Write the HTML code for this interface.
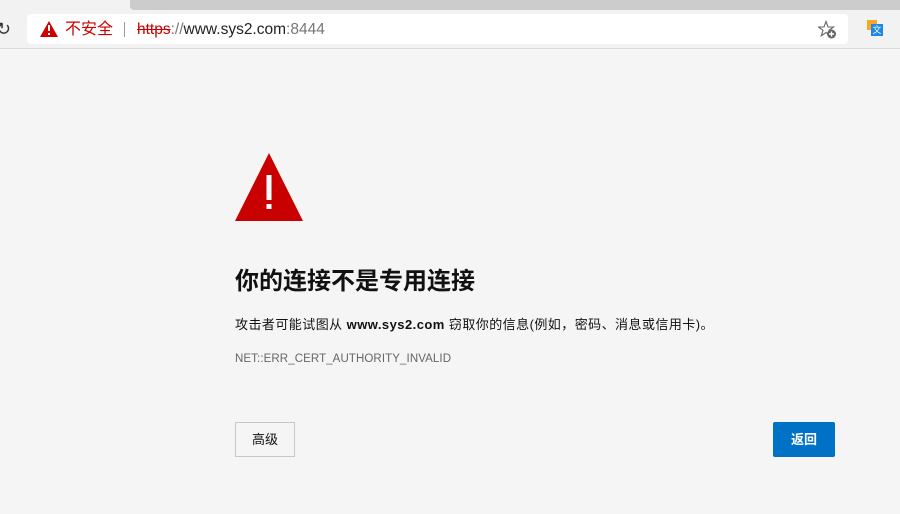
<!DOCTYPE html>
<html><head><meta charset="utf-8"><style>
body{margin:0;width:900px;height:514px;background:#f5f5f5;font-family:"Liberation Sans","Noto Sans CJK SC",sans-serif;position:relative;overflow:hidden}
.abs{position:absolute}
</style></head><body>
<div class="abs" style="left:0;top:0;width:900px;height:48px;background:#f2f2f2"></div>
<div class="abs" style="left:130px;top:0;width:780px;height:10px;background:#cccccc;border-bottom-left-radius:4px"></div>
<div class="abs" style="left:0;top:48px;width:900px;height:1px;background:#d9d9d9"></div>
<div class="abs" style="left:-4px;top:19px;font-size:18px;color:#333">↻</div>
<div class="abs" style="left:27px;top:14px;width:821px;height:30px;background:#fff;border-radius:4px"></div>
<svg class="abs" style="left:40px;top:21px" width="18" height="16" viewBox="0 0 18 16"><path d="M9 0L18 16H0Z" fill="#c00"/><rect x="8" y="4" width="2" height="6" fill="#fff"/><rect x="8" y="12" width="2" height="2" fill="#fff"/></svg>
<div class="abs" style="left:65px;top:20px;font-size:16px;color:#c00;line-height:20px">不安全</div>
<div class="abs" style="left:124px;top:22px;width:1px;height:15px;background:#999"></div>
<div class="abs" style="left:137px;top:20px;font-size:15.5px;line-height:20px;color:#222"><span style="color:#c00;text-decoration:line-through">https</span><span style="color:#777">://</span>www.sys2.com<span style="color:#777">:8444</span></div>
<svg class="abs" style="left:818px;top:20px" width="20" height="20" viewBox="0 0 20 20"><path d="M8 1.5L10 7H15.5L11 10.3L12.7 15.8L8 12.5L3.3 15.8L5 10.3L0.5 7H6Z" fill="none" stroke="#666" stroke-width="1.1"/><circle cx="13.5" cy="14" r="4.5" fill="#666"/><path d="M13.5 11.5V16.5M11 14H16" stroke="#fff" stroke-width="1.4"/></svg>
<div class="abs" style="left:867px;top:20px;width:10px;height:10px;background:#f9a825"></div>
<div class="abs" style="left:871px;top:24px;width:12px;height:12px;background:#1e88e5;color:#fff;font-size:9px;line-height:12px;text-align:center">文</div>
<svg class="abs" style="left:235px;top:153px" width="68" height="69" viewBox="0 0 68 69"><path d="M34 0L68 68H0Z" fill="#c80000"/><rect x="31.5" y="22" width="5" height="25" fill="#fff"/><rect x="31.5" y="51" width="5" height="5" fill="#fff"/></svg>
<div class="abs" style="left:235px;top:266px;font-size:24px;font-weight:bold;color:#111;line-height:32px">你的连接不是专用连接</div>
<div class="abs" style="left:235px;top:316px;font-size:13px;letter-spacing:0.45px;color:#111;line-height:18px">攻击者可能试图从 <b>www.sys2.com</b> 窃取你的信息(例如，密码、消息或信用卡)。</div>
<div class="abs" style="left:235px;top:352px;font-size:11.5px;letter-spacing:0.1px;color:#666;line-height:14px">NET::ERR_CERT_AUTHORITY_INVALID</div>
<div class="abs" style="left:235px;top:422px;width:58px;height:33px;border:1px solid #c8c8c8;font-size:13px;line-height:33px;text-align:center;color:#111">高级</div>
<div class="abs" style="left:773px;top:422px;width:62px;height:35px;background:#0072c6;border-radius:2px;font-size:13px;line-height:35px;text-align:center;color:#fff;font-weight:bold">返回</div>
</body></html>
